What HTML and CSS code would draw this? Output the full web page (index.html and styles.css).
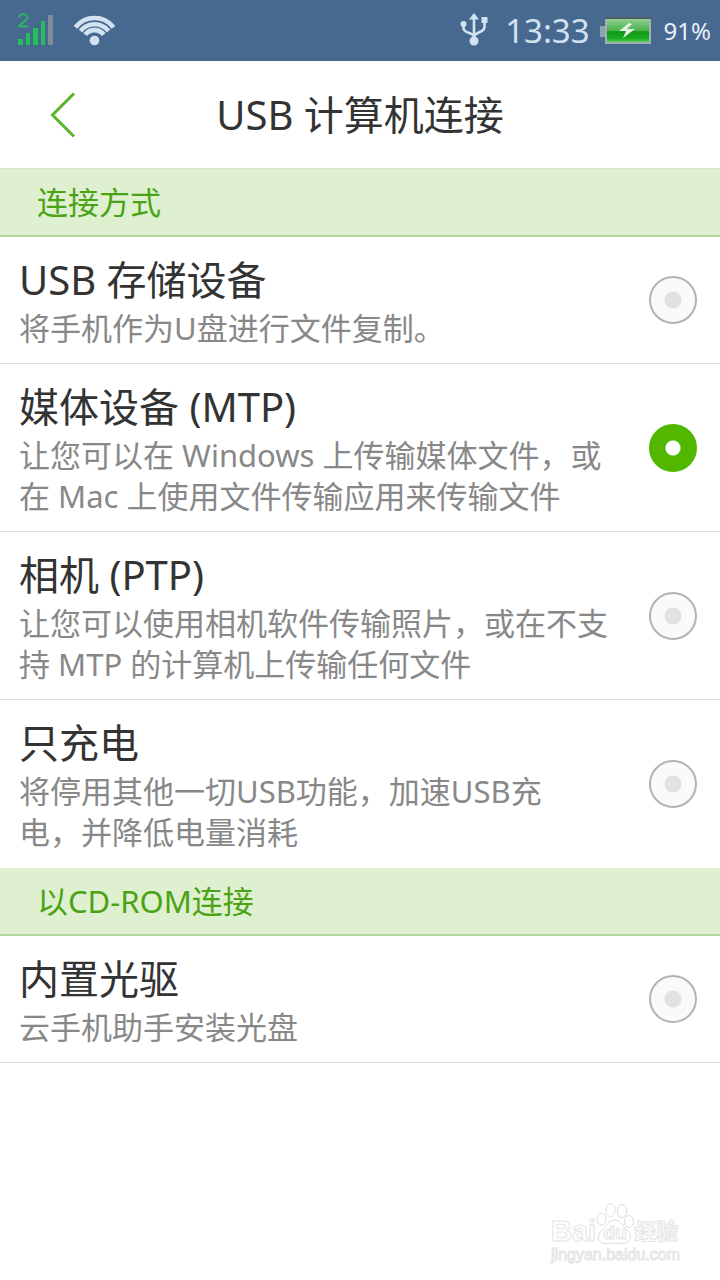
FILE: index.html
```html
<!DOCTYPE html>
<html lang="zh-CN">
<head>
<meta charset="utf-8">
<meta name="viewport" content="width=device-width, initial-scale=1">
<title>USB 计算机连接</title>
<link rel="stylesheet" href="styles.css">
</head>
<body>
<div class="screen">
  <div class="status">
    <div class="status-group status-left">
      <svg class="signal" width="36" height="36" viewBox="0 -2 36 36" aria-hidden="true">
        <path d="M1.200 2.500C1.200 -2 9.500 -2 9.500 2.500C9.500 6 2.500 7.500 1.500 11.500H10.500" fill="none" stroke="#2cb566" stroke-width="2"/>
        <path d="M0 24h5v6H0zM8 18h4v12H8zM15 13h5v17h-5zM23 6h4v24h-4z" fill="#25bd5e"/>
        <path d="M30 0h5v30h-5z" fill="#7e8c97"/>
      </svg>
      <svg class="wifi" width="41" height="32" viewBox="0 0 41 32" aria-hidden="true">
        <g fill="none" stroke="#d3e2f1" stroke-width="4.600">
          <path d="M1.500 12.400A24 24 0 0 1 39.500 12.400"/>
          <path d="M6.500 16A17.800 17.800 0 0 1 34.500 16"/>
          <path d="M11.200 19.700A11.800 11.800 0 0 1 29.800 19.700"/>
        </g>
        <circle cx="20.500" cy="25.500" r="4.800" fill="#d3e2f1"/>
      </svg>
    </div>
    <div class="status-group">
      <svg class="usb" width="28" height="34" viewBox="0 0 28 34" aria-hidden="true">
        <path d="M14 5V28M3.500 11V14C3.500 20 14 18 14 23C14 18 24.500 19 24.500 13V7" fill="none" stroke="#d3e2f1" stroke-width="2.600"/>
        <path d="M14 -1l5 6.500H9zM21.500 3h6v6h-6z" fill="#d3e2f1"/>
        <circle cx="3.500" cy="10" r="3" fill="#d3e2f1"/>
        <circle cx="14" cy="27" r="4.500" fill="#d3e2f1"/>
      </svg>
      <span class="clock">13:33</span>
      <svg class="battery" width="52" height="28" viewBox="0 0 52 28" aria-hidden="true">
        <defs>
          <linearGradient id="charge" x1="0" y1="0" x2="0" y2="1">
            <stop offset="0" stop-color="#91cf91"/>
            <stop offset=".5" stop-color="#49b34c"/>
            <stop offset=".55" stop-color="#129718"/>
            <stop offset=".85" stop-color="#18ad20"/>
            <stop offset="1" stop-color="#5cd05c"/>
          </linearGradient>
        </defs>
        <path d="M0 9h6v11H0z" fill="#8fa3ad"/>
        <path d="M5 1h46v26H5z" fill="#a2b0b5"/>
        <path d="M5 0h46v2H5z" fill="#4c5d64"/>
        <path d="M7 2h42v23H7z" fill="url(#charge)"/>
        <path d="M29 6L19 14h7l-3 7 12-9h-8l5-5z" fill="#e2f1e3"/>
      </svg>
      <span class="percent">91%</span>
    </div>
  </div>

  <header class="titlebar">
    <button class="back" type="button" aria-label="返回">
      <svg width="26" height="46" viewBox="0 0 26 46" aria-hidden="true">
        <path d="M24 1.500L2.500 23L24 44.500" fill="none" stroke="#5ab52b" stroke-width="3"/>
      </svg>
    </button>
    <h1 class="heading">USB 计算机连接</h1>
  </header>

  <main>
    <h2 class="section">连接方式</h2>
    <label class="option">
      <span class="text"><span class="name">USB 存储设备</span><span class="desc">将手机作为U盘进行文件复制。</span></span>
      <input class="radio" type="radio" name="mode">
    </label>
    <label class="option">
      <span class="text"><span class="name">媒体设备 (MTP)</span><span class="desc">让您可以在 Windows 上传输媒体文件，或<br>在 Mac 上使用文件传输应用来传输文件</span></span>
      <input class="radio" type="radio" name="mode" checked>
    </label>
    <label class="option">
      <span class="text"><span class="name">相机 (PTP)</span><span class="desc">让您可以使用相机软件传输照片，或在不支<br>持 MTP 的计算机上传输任何文件</span></span>
      <input class="radio" type="radio" name="mode">
    </label>
    <label class="option last">
      <span class="text"><span class="name">只充电</span><span class="desc">将停用其他一切USB功能，加速USB充<br>电，并降低电量消耗</span></span>
      <input class="radio" type="radio" name="mode">
    </label>
    <h2 class="section">以CD-ROM连接</h2>
    <label class="option">
      <span class="text"><span class="name">内置光驱</span><span class="desc">云手机助手安装光盘</span></span>
      <input class="radio" type="radio" name="mode">
    </label>
  </main>

  <footer class="watermark">
    <div class="brand">
      <span class="brand-latin">Bai</span>
      <span class="paw">
        <svg width="38" height="42" viewBox="0 0 38 42" aria-hidden="true">
          <g fill="#fff" stroke="#dcdcdc" stroke-width="1">
            <ellipse cx="5.500" cy="16" rx="4.500" ry="6"/>
            <ellipse cx="14.500" cy="7" rx="4.500" ry="6.500"/>
            <ellipse cx="26" cy="8" rx="4.800" ry="6.500"/>
            <ellipse cx="33" cy="18.500" rx="4.500" ry="6"/>
            <path d="M19 17C25 17 27 24 32 28C37 33 34 41 27 40.500C22 40 15 40 10 40.500C2 41 0 33 5 28C10 24 12 17 19 17Z"/>
          </g>
        </svg>
        <span class="du">du</span>
      </span>
      <span class="brand-cjk">经验</span>
    </div>
    <div class="site">jingyan.baidu.com</div>
  </footer>
</div>
</body>
</html>
```

FILE: styles.css
```css
* { box-sizing: border-box; }

body {
  margin: 0;
  background: #fff;
  color: #333;
  font-family: "Noto Sans", "Noto Sans CJK SC", sans-serif;
}

.screen {
  display: flex;
  flex-direction: column;
  min-height: 100vh;
}

.status {
  display: flex;
  justify-content: space-between;
  align-items: center;
  height: 61px;
  padding: 0 9px 0 18px;
  background: #47698f;
  color: #d3e2f1;
}

.status-group { display: flex; align-items: center; }
.status-left { gap: 20px; }
.usb { margin-right: 17px; overflow: visible; }
.clock { margin-right: 10px; font-size: 33px; line-height: 61px; }
.battery { margin-right: 12px; }
.percent { color: #e8f0f8; font-size: 24px; line-height: 60px; }

.titlebar {
  display: grid;
  grid-template-columns: 100px 1fr 100px;
  align-items: center;
  height: 108px;
  border-bottom: 1px solid #dce5d3;
}

.back {
  display: flex;
  justify-content: flex-end;
  padding: 0 24px 0 0;
  border: 0;
  background: none;
  cursor: pointer;
}

.heading {
  margin: 0;
  text-align: center;
  font-size: 40px;
  font-weight: 400;
  line-height: 54px;
}

.section {
  margin: 0;
  padding: 0 37px;
  border-bottom: 2px solid #b0d797;
  background: #dff0d0;
  color: #4aa314;
  font-size: 31px;
  font-weight: 400;
  line-height: 66px;
}

.option {
  display: flex;
  align-items: center;
  justify-content: space-between;
  padding: 14px 23px 14px 19px;
  border-bottom: 1px solid #dedede;
}

.last { border-bottom-color: transparent; }
.name, .desc { display: block; }
.name { font-size: 40px; line-height: 57px; }
.desc { color: #888; font-size: 31px; line-height: 41px; }

.radio {
  flex: none;
  width: 48px;
  height: 48px;
  margin: 0;
  border: 2px solid #b3b3b3;
  border-radius: 50%;
  appearance: none;
  background: radial-gradient(circle, #e2e2e2 8px, #fafafa 9px);
}

.radio:checked {
  border-color: #51b700;
  background: radial-gradient(circle, #fff 7px, #51b700 8px);
}

.watermark {
  align-self: flex-end;
  margin-top: auto;
  padding: 0 40px 15px 0;
  color: #fff;
  -webkit-text-stroke: 1px #e4e4e4;
}

.brand { display: flex; align-items: flex-end; }
.brand-latin { font: 700 29px/28px "Liberation Sans", sans-serif; }
.brand-cjk { font-size: 22px; font-weight: 700; line-height: 30px; }
.paw { display: grid; place-items: end center; }
.paw > * { grid-area: 1 / 1; }
.du { font: 700 19px/24px "Liberation Sans", sans-serif; }
.site { font: 400 16px/20px "Liberation Sans", sans-serif; }
```
